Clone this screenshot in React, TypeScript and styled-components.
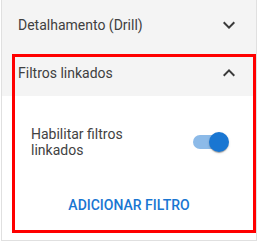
import React from "react";
import styled, { createGlobalStyle } from "styled-components";

const Global = createGlobalStyle`
  html, body { margin: 0; padding: 0; background: #ffffff; }
  body { font-family: Roboto, "Liberation Sans", Arial, sans-serif; }
`;

const Panel = styled.div`
  position: relative;
  box-sizing: border-box;
  width: 256px;
  margin-left: 1px;
  border: 1px solid #e0e0e0;
  border-top: none;
  background: #ffffff;
`;

const Header = styled.div`
  display: flex;
  align-items: center;
  justify-content: space-between;
  height: 48px;
  padding: 1px 15px 0 16px;
  box-sizing: border-box;
  background: #f4f4f4;
  color: #404040;
  font-size: 14px;
  line-height: 20px;
`;

const Chevron = styled.svg<{ $up?: boolean }>`
  width: 24px;
  height: 24px;
  fill: #3a3a3a;
  transform: ${(p) => (p.$up ? "rotate(180deg)" : "none")};
`;

const Content = styled.div`
  display: flex;
  flex-direction: column;
  padding: 27px 0 17px;
`;

const SettingRow = styled.div`
  display: flex;
  align-items: center;
  justify-content: space-between;
  height: 38px;
  padding: 0 27px 0 29px;
`;

const Label = styled.div`
  width: 120px;
  color: #424242;
  font-size: 14px;
  line-height: 16.5px;
`;

const SwitchWrap = styled.div`
  position: relative;
  width: 36px;
  height: 20px;
  display: flex;
  align-items: center;
`;

const Track = styled.div`
  width: 30px;
  height: 14px;
  border-radius: 7px;
  background: #8cbae8;
`;

const Thumb = styled.div`
  position: absolute;
  right: 0;
  top: 0;
  width: 20px;
  height: 20px;
  border-radius: 50%;
  background: #1976d2;
  box-shadow: 0 2px 1px -1px rgba(0, 0, 0, 0.2), 0 1px 1px 0 rgba(0, 0, 0, 0.14),
    0 1px 3px 0 rgba(0, 0, 0, 0.12);
`;

const ActionButton = styled.button`
  align-self: center;
  margin-top: 26px;
  height: 36px;
  padding: 0 8px;
  border: none;
  background: transparent;
  color: #1976d2;
  font-family: Roboto, "Liberation Sans", Arial, sans-serif;
  font-size: 14px;
  font-weight: 500;
  letter-spacing: 0;
  text-transform: uppercase;
  cursor: pointer;
`;

const Highlight = styled.div`
  position: absolute;
  left: 10px;
  top: 54px;
  width: 244px;
  height: 179px;
  box-sizing: border-box;
  border: 3px solid #ff0000;
  pointer-events: none;
`;

const ExpandIcon = ({ up }: { up?: boolean }) => (
  <Chevron $up={up} viewBox="0 0 24 24">
    <path d="M16.59 8.59L12 13.17 7.41 8.59 6 10l6 6 6-6z" />
  </Chevron>
);

export default function App() {
  return (
    <>
      <Global />
      <Panel>
        <Header>
          <span>Detalhamento (Drill)</span>
          <ExpandIcon />
        </Header>
        <Header>
          <span>Filtros linkados</span>
          <ExpandIcon up />
        </Header>
        <Content>
          <SettingRow>
            <Label>Habilitar filtros linkados</Label>
            <SwitchWrap>
              <Track />
              <Thumb />
            </SwitchWrap>
          </SettingRow>
          <ActionButton>Adicionar filtro</ActionButton>
        </Content>
        <Highlight />
      </Panel>
    </>
  );
}
